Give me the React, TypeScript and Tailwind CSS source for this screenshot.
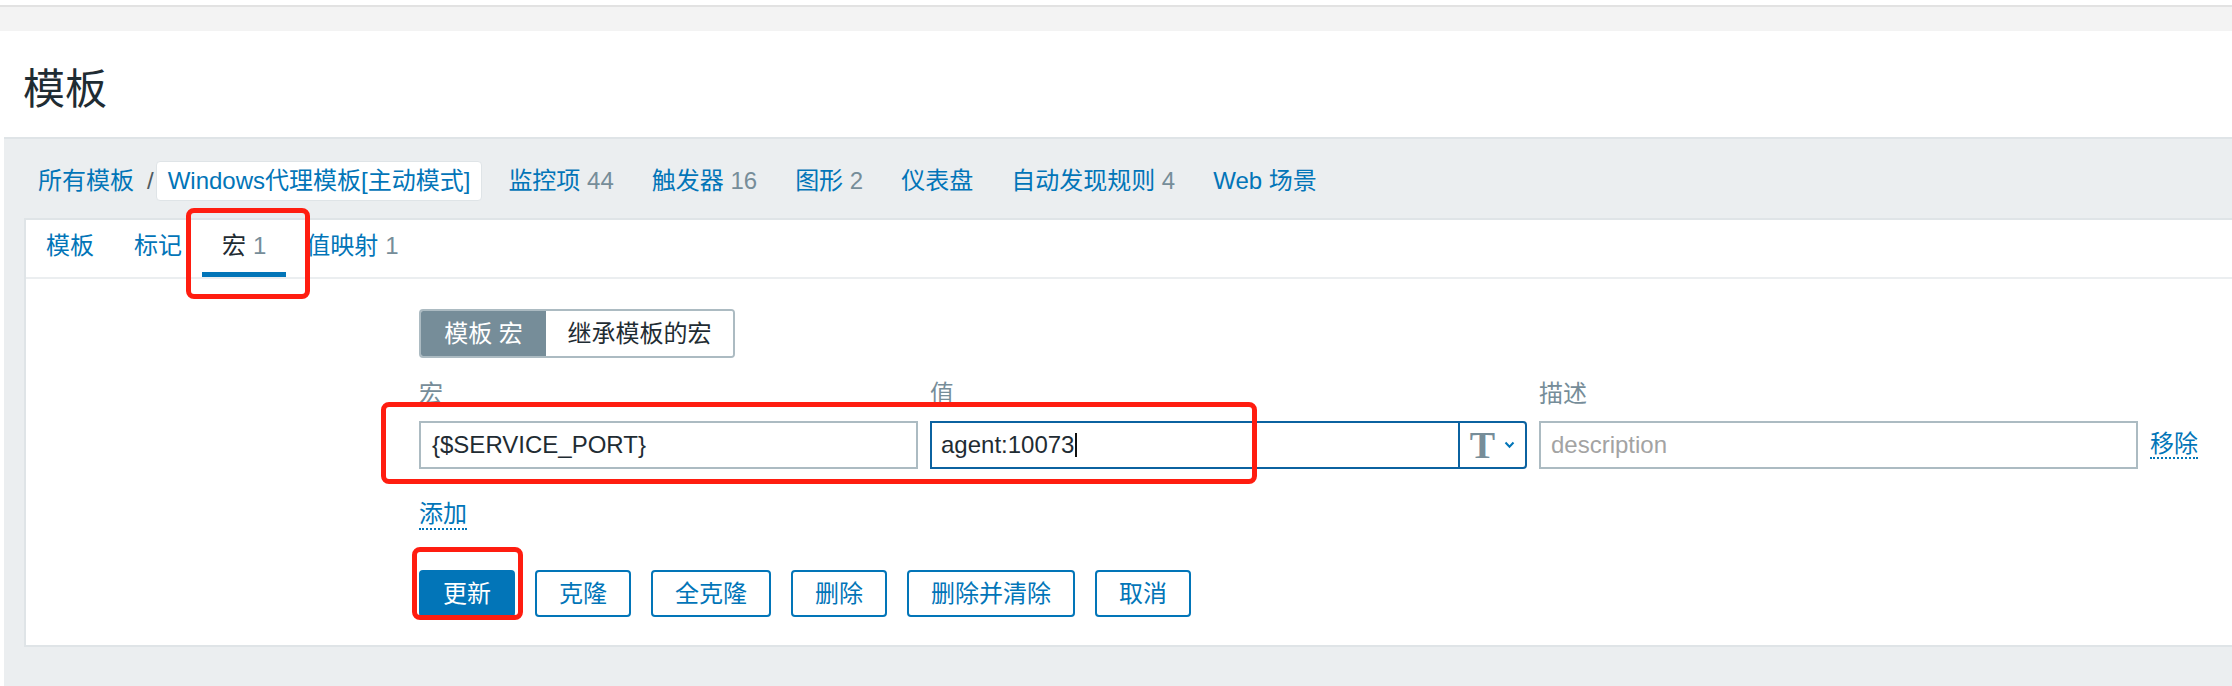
import React from "react";

const link = "text-[#0275b8]";
const muted = "text-[#768d99]";

interface NavItem {
  label: string;
  count?: number;
}

const navItems: NavItem[] = [
  { label: "监控项", count: 44 },
  { label: "触发器", count: 16 },
  { label: "图形", count: 2 },
  { label: "仪表盘" },
  { label: "自动发现规则", count: 4 },
  { label: "Web 场景" },
];

const tabs: NavItem[] = [
  { label: "模板" },
  { label: "标记" },
  { label: "宏", count: 1 },
  { label: "值映射", count: 1 },
];

const actions = ["克隆", "全克隆", "删除", "删除并清除", "取消"];

function ChevronDown() {
  return (
    <svg width="11" height="8" viewBox="0 0 11 8" fill="none">
      <polyline points="1.5,1.5 5.5,5.8 9.5,1.5" stroke="#0275b8" strokeWidth="2" />
    </svg>
  );
}

export default function App() {
  return (
    <div className="relative flex h-[686px] w-full flex-col overflow-hidden bg-white font-['Liberation_Sans','Noto_Sans_CJK_SC',sans-serif] text-[24px] text-[#1f2c33]">
      {/* top strip */}
      <div className="h-[5px] shrink-0 bg-white" />
      <div className="h-[26px] shrink-0 border-t-2 border-[#e2e2e2] bg-[#f3f3f3]" />

      <header className="h-[106px] shrink-0 pl-[23px] pt-[38px]">
        <h1 className="text-[42px] leading-[42px]">模板</h1>
      </header>

      <div className="ml-[4px] flex flex-1 flex-col border-t-2 border-[#dfe4e7] bg-[#ebeef0]">
        {/* breadcrumbs */}
        <div className="flex h-[40px] items-center pl-[34px] mt-[22px] mb-[17px]">
          <a className={link}>所有模板</a>
          <span className="ml-[13px] mr-[2px] text-[#4f5b61]">/</span>
          <div className="flex items-center gap-[14px]">
            <a className={`flex h-[40px] items-center rounded-[4px] border border-[#dfe4e7] bg-white px-[11px] ${link}`}>
              Windows代理模板[主动模式]
            </a>
            {navItems.map((item) => (
              <a key={item.label} className={`px-3 ${link}`}>
                {item.label}
                {item.count !== undefined && <span className={muted}> {item.count}</span>}
              </a>
            ))}
          </div>
        </div>

        {/* tab panel */}
        <div className="ml-[20px] border-y-2 border-l-2 border-[#dfe4e7] bg-white">
          <div className="flex h-[59px] border-b-2 border-[#ebeef0]">
            {tabs.map((tab) => {
              const active = tab.label === "宏";
              return (
                <div
                  key={tab.label}
                  className={`flex items-center border-b-[5px] px-5 ${
                    active ? "border-[#0275b8] text-[#1f2c33]" : `border-transparent ${link}`
                  }`}
                >
                  {tab.label}
                  {tab.count !== undefined && <span className={`ml-[7px] ${muted}`}>{tab.count}</span>}
                </div>
              );
            })}
          </div>

          <div className="pl-[393px] pt-[30px] pb-[28px]">
            {/* macro scope switch */}
            <div className="flex h-[49px] w-[316px] overflow-hidden rounded-[4px] border-2 border-[#acbbc2]">
              <div className="flex w-[125px] items-center justify-center bg-[#768d99] text-white">模板 宏</div>
              <div className="flex flex-1 items-center justify-center bg-white">继承模板的宏</div>
            </div>

            <div className="mt-[22px] grid grid-cols-[499px_597px_599px_auto] gap-x-[12px] gap-y-[13px]">
              <div className={`leading-[28px] ${muted}`}>宏</div>
              <div className={`leading-[28px] ${muted}`}>值</div>
              <div className={`leading-[28px] ${muted}`}>描述</div>
              <div />

              <div className="flex h-[48px] items-center border-2 border-[#acbbc2] px-[11px]">{"{$SERVICE_PORT}"}</div>
              <div className="flex h-[48px] rounded-r-[4px] border-2 border-[#0b62a0]">
                <div className="flex flex-1 items-center px-[9px]">
                  agent:10073
                  <span className="ml-[1px] h-[24px] w-[2px] bg-[#111]" />
                </div>
                <div className="flex w-[67px] items-center justify-center gap-[9px] border-l-2 border-[#0b62a0]">
                  <span className="font-['Liberation_Serif',serif] text-[38px] font-bold leading-none text-[#768d99]">T</span>
                  <ChevronDown />
                </div>
              </div>
              <div className="flex h-[48px] items-center border-2 border-[#acbbc2] px-[10px] text-[#a3a3a3]">description</div>
              <div className="flex h-[48px] items-center">
                <a className={`border-b-2 border-dotted border-[#0275b8] leading-[26px] ${link}`}>移除</a>
              </div>
            </div>

            <div className="mt-[27px]">
              <a className={`inline-block border-b-2 border-dotted border-[#0275b8] leading-[28px] ${link}`}>添加</a>
            </div>

            <div className="mt-[38px] flex gap-5">
              <button className="h-[47px] min-w-[96px] rounded-[4px] border-2 border-[#0275b8] bg-[#0275b8] px-[22px] text-white">
                更新
              </button>
              {actions.map((label) => (
                <button
                  key={label}
                  className={`h-[47px] min-w-[96px] rounded-[4px] border-2 border-[#0275b8] bg-white px-[22px] ${link}`}
                >
                  {label}
                </button>
              ))}
            </div>
          </div>
        </div>
      </div>

      {/* red callouts */}
      <div className="absolute left-[186px] top-[208px] h-[91px] w-[124px] rounded-[8px] border-[5px] border-[#ff1d10]" />
      <div className="absolute left-[381px] top-[402px] h-[82px] w-[876px] rounded-[8px] border-[5px] border-[#ff1d10]" />
      <div className="absolute left-[412px] top-[547px] h-[73px] w-[111px] rounded-[8px] border-[5px] border-[#ff1d10]" />
    </div>
  );
}
